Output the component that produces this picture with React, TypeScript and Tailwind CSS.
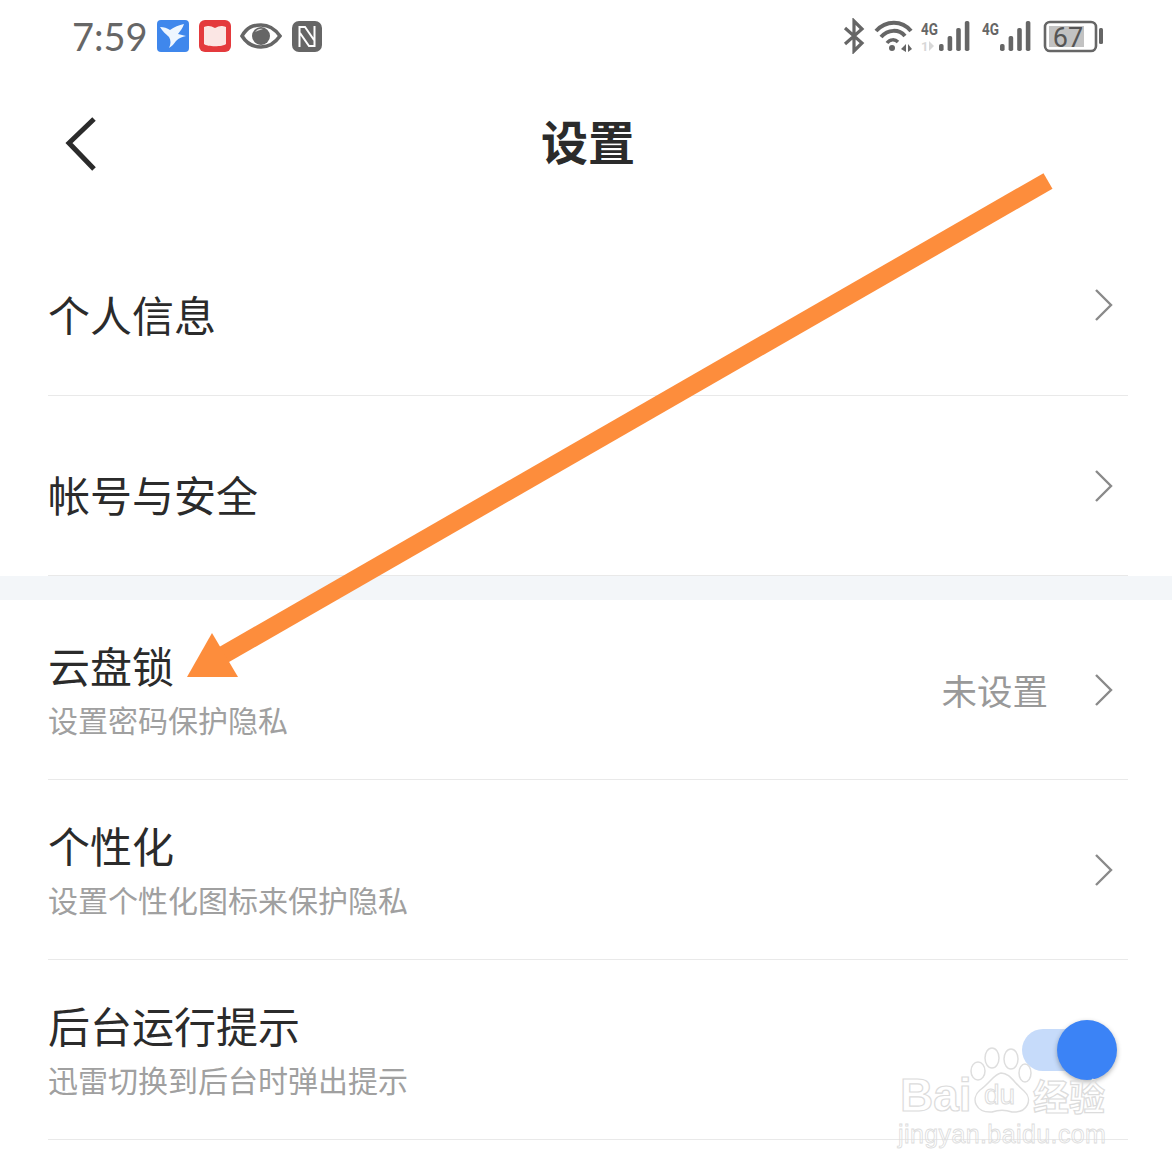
const cjk = "font-['Noto_Sans_CJK_SC','Noto_Sans',sans-serif]"

function Chevron() {
  return (
    <svg width="20" height="34" viewBox="0 0 20 34" className="shrink-0">
      <path d="M2 2 L17 17 L2 32" fill="none" stroke="#8a8a8a" strokeWidth="2.4" />
    </svg>
  )
}

function Row({
  title,
  sub,
  value,
  toggle,
  className,
}: {
  title: string
  sub?: string
  value?: string
  toggle?: boolean
  className: string
}) {
  return (
    <div className={`mr-11 ml-12 flex items-center border-b border-[#e9e9e9] ${className}`}>
      <div className={sub ? "flex-1 pb-[3px]" : "flex-1 pt-[17px]"}>
        <div className="text-[42px] leading-[60px] text-[#2b2b2b]">{title}</div>
        {sub && <div className="mt-[2px] text-[30px] leading-[44px] text-[#a0a0a0]">{sub}</div>}
      </div>
      {value && <span className="mr-[46px] text-[35.5px] text-[#999999]">{value}</span>}
      {toggle ? (
        <div className="relative mr-[38px] h-[42px] w-[68px] rounded-full bg-[#c6dbfa]">
          <div className="absolute top-[-9px] left-[35px] h-[60px] w-[60px] rounded-full bg-[#3b83f6] shadow-[0_2px_5px_rgba(0,0,0,0.3)]" />
        </div>
      ) : (
        <div className="mr-[14px]">
          <Chevron />
        </div>
      )}
    </div>
  )
}

function Bars({ x }: { x: number }) {
  const hs = [7, 15, 23, 30]
  return (
    <>
      {hs.map((h, i) => (
        <rect key={i} x={x + i * 8.6} y={33 - h} width="4.6" height={h} rx="1.8" fill="#666" />
      ))}
    </>
  )
}

function StatusLeft() {
  return (
    <div className="flex items-center">
      <span className="w-[85px] font-['Lato',sans-serif] text-[38px] leading-none text-[#666666]">7:59</span>
      <svg width="166" height="34" viewBox="0 0 166 34">
        <rect x="0" y="1" width="32" height="32" rx="4" fill="#3f87ec" />
        <path d="M3 8 C7 8 10 9 13 11 C17 8 22 6 27 5 C26 9 23 12 21 15 L29 17 C25 18 22 19 19 22 C17 25 15 27 12 29 C14 25 14 21 12 18 C9 15 5 12 3 8Z" fill="#eef6ff" />
        <rect x="42" y="1" width="32" height="32" rx="6" fill="#e43a3d" />
        <path d="M47 8 C52 6 54 7 58 9 C62 7 64 6 69 8 L69 25 C66 28 50 28 47 25Z" fill="#fbe6e4" />
        <path d="M85 17 C90 8 96 6 104 6 C112 6 118 10 123 17 C118 24 112 28 104 28 C96 28 90 25 85 17Z" fill="none" stroke="#666" strokeWidth="3.6" />
        <circle cx="104" cy="17" r="9" fill="#666" />
        <path d="M98 13 C100 10 103 9 106 10 C103 11 100 12 98 13Z" fill="#ddd" />
        <rect x="135" y="2" width="30" height="31" rx="7" fill="#666" />
        <path d="M142.5 28 L142.5 8 L148 8 L157 21 M157.5 7 L157.5 27 L152 27 L143 14" stroke="#fff" strokeWidth="2" fill="none" />
      </svg>
    </div>
  )
}

function StatusRight() {
  return (
    <svg width="262" height="36" viewBox="0 0 262 36">
      <path d="M3 10 L20 25 L12 33 L12 3 L20 11 L3 26" fill="none" stroke="#666" strokeWidth="3.2" />
      <path d="M34 13 C44 2 60 2 69 13" fill="none" stroke="#666" strokeWidth="4" />
      <path d="M39 19 C46 11 57 11 63 18" fill="none" stroke="#666" strokeWidth="4" />
      <path d="M45 25 C48 21 53 21 56 24" fill="none" stroke="#666" strokeWidth="3.5" />
      <circle cx="50" cy="30" r="3" fill="#666" />
      <path d="M59 31 L64 26 L64 34Z M66 26 L70 31 L66 34Z" fill="#666" />
      <text x="79" y="17" fontSize="17" fontWeight="700" fill="#666" fontFamily="'Roboto',sans-serif" textLength="17" lengthAdjust="spacingAndGlyphs">4G</text>
      <text x="79" y="33" fontSize="13" fontWeight="700" fill="#d8d8d8" fontFamily="'Roboto',sans-serif">1</text>
      <path d="M87 23 L92 28 L87 33Z" fill="#d8d8d8" />
      <Bars x={97} />
      <text x="140" y="17" fontSize="17" fontWeight="700" fill="#666" fontFamily="'Roboto',sans-serif" textLength="17" lengthAdjust="spacingAndGlyphs">4G</text>
      <Bars x={158} />
      <rect x="203" y="4" width="51" height="29" rx="5" fill="none" stroke="#666" strokeWidth="2.6" />
      <rect x="207" y="8" width="35" height="21" fill="#c2c2c2" />
      <text x="226" y="29" fontSize="27" textAnchor="middle" fill="#555" fontFamily="'Roboto',sans-serif">67</text>
      <rect x="257" y="10" width="4" height="16" rx="1.5" fill="#666" />
    </svg>
  )
}

export default function App() {
  return (
    <div className={`relative h-[1172px] w-[1172px] overflow-hidden bg-white ${cjk}`}>
      {/* status bar */}
      <div className="flex h-[72px] items-center justify-between pr-[68px] pl-[72px]">
        <StatusLeft />
        <StatusRight />
      </div>

      {/* header */}
      <div className="relative flex h-[143px] items-start justify-center pt-[36px]">
        <svg width="34" height="56" viewBox="0 0 34 56" className="absolute top-[44px] left-[64px]">
          <path d="M30 3 L5 27 L30 53" fill="none" stroke="#2b2b2b" strokeWidth="5" />
        </svg>
        <h1 className="pl-[4px] text-[47px] leading-[64px] font-bold text-[#2b2b2b]">设置</h1>
      </div>

      <Row title="个人信息" className="h-[181px]" />
      <Row title="帐号与安全" className="h-[180px]" />
      <div className="h-[24px] bg-[#f3f6f9]" />
      <Row title="云盘锁" sub="设置密码保护隐私" value="未设置" className="h-[180px]" />
      <Row title="个性化" sub="设置个性化图标来保护隐私" className="h-[180px]" />
      <Row title="后台运行提示" sub="迅雷切换到后台时弹出提示" toggle className="h-[180px]" />

      {/* annotation arrow */}
      <svg width="1172" height="1172" viewBox="0 0 1172 1172" className="pointer-events-none absolute inset-0">
        <path d="M1048 181 L218 658" stroke="#fd8d3c" strokeWidth="18" fill="none" />
        <path d="M187 677 L212 633 L238 677Z" fill="#fd8d3c" />
      </svg>

      {/* watermark */}
      <div className="pointer-events-none absolute top-[1047px] left-[898px] w-[220px] font-['Liberation_Sans',sans-serif]">
        <svg width="70" height="68" viewBox="0 0 70 68" className="absolute top-0 left-[70px]">
          <g fill="rgba(255,255,255,0.75)" stroke="#dedede" strokeWidth="1.5">
            <ellipse cx="10" cy="24" rx="7" ry="9" />
            <ellipse cx="24" cy="11" rx="7" ry="10" />
            <ellipse cx="43" cy="12" rx="7" ry="10" />
            <ellipse cx="57" cy="26" rx="6" ry="9" />
            <path d="M33 26 C26 27 22 36 12 43 C2 52 8 66 24 65 C30 63 38 63 44 65 C60 66 65 52 56 44 C46 36 42 26 33 26Z" />
          </g>
        </svg>
        <div className="relative mt-[29px] flex h-[38px] items-center text-[46px] leading-none text-transparent [-webkit-text-stroke:1.2px_#dcdcdc]">
          <span className="w-[86px] pl-[2px] font-bold">Bai</span>
          <span className="w-[49px] text-[28px] [-webkit-text-stroke:1px_#dcdcdc]">du</span>
          <span className={`text-[36px] font-bold ${cjk}`}>经验</span>
        </div>
        <div className="relative mt-[6px] text-[25px] leading-7 tracking-[0.4px] whitespace-nowrap text-transparent [-webkit-text-stroke:0.8px_#dcdcdc]">
          jingyan.baidu.com
        </div>
      </div>
    </div>
  )
}
